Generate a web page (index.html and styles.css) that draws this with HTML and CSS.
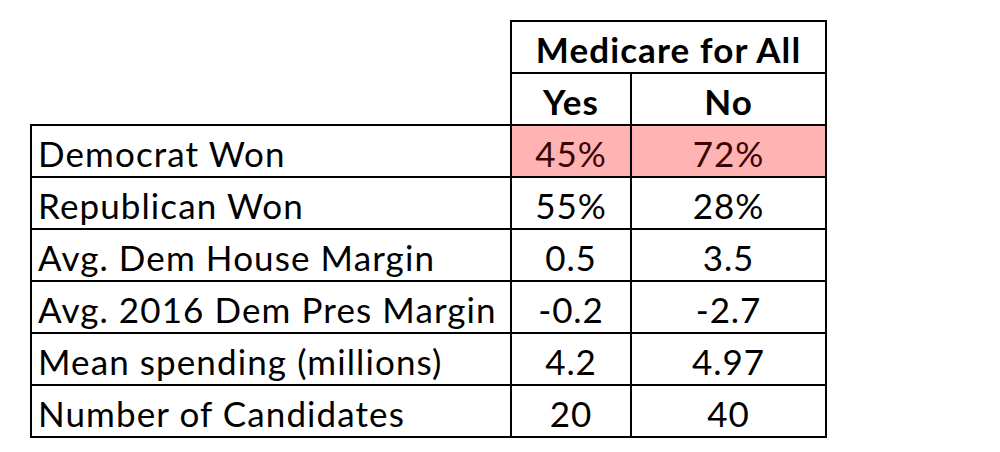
FILE: index.html
```html
<!DOCTYPE html>
<html>
<head>
<meta charset="utf-8">
<link rel="stylesheet" href="styles.css">
</head>
<body>
<table class="tbl">
  <colgroup>
    <col class="c-label">
    <col class="c-yes">
    <col class="c-no">
  </colgroup>
  <tr>
    <td class="blank"></td>
    <th class="head" colspan="2">Medicare for All</th>
  </tr>
  <tr>
    <td class="blank"></td>
    <th class="head">Yes</th>
    <th class="head">No</th>
  </tr>
  <tr>
    <td class="label">Democrat Won</td>
    <td class="num hl">45%</td>
    <td class="num hl">72%</td>
  </tr>
  <tr>
    <td class="label">Republican Won</td>
    <td class="num">55%</td>
    <td class="num">28%</td>
  </tr>
  <tr>
    <td class="label">Avg. Dem House Margin</td>
    <td class="num">0.5</td>
    <td class="num">3.5</td>
  </tr>
  <tr>
    <td class="label">Avg. 2016 Dem Pres Margin</td>
    <td class="num">-0.2</td>
    <td class="num">-2.7</td>
  </tr>
  <tr>
    <td class="label">Mean spending (millions)</td>
    <td class="num">4.2</td>
    <td class="num">4.97</td>
  </tr>
  <tr>
    <td class="label">Number of Candidates</td>
    <td class="num">20</td>
    <td class="num">40</td>
  </tr>
</table>
</body>
</html>
```
FILE: styles.css
```css
html, body {
  margin: 0;
  padding: 0;
  background: #ffffff;
}
body {
  font-family: Lato, "Open Sans", sans-serif;
  color: #000;
}
.tbl {
  border-collapse: collapse;
  table-layout: fixed;
  margin: 20px 0 0 30px;
  font-size: 35px;
  letter-spacing: 0.9px;
}
.c-label { width: 480px; }
.c-yes { width: 120px; }
.c-no { width: 195px; }
.tbl td, .tbl th {
  height: 46px;
  padding: 4px 0 0 0;
  line-height: 44px;
  vertical-align: middle;
  white-space: nowrap;
  overflow: hidden;
}
.blank { border: none; }
.head {
  border: 2px solid #000;
  font-weight: 700;
  text-align: center;
  letter-spacing: 1.1px;
}
.label {
  border: 2px solid #000;
  text-align: left;
  padding-left: 6px !important;
  letter-spacing: 1.1px;
}
.num {
  border: 2px solid #000;
  text-align: center;
}
.hl {
  background: #ffb3b3;
  color: #3a0505;
}
```
